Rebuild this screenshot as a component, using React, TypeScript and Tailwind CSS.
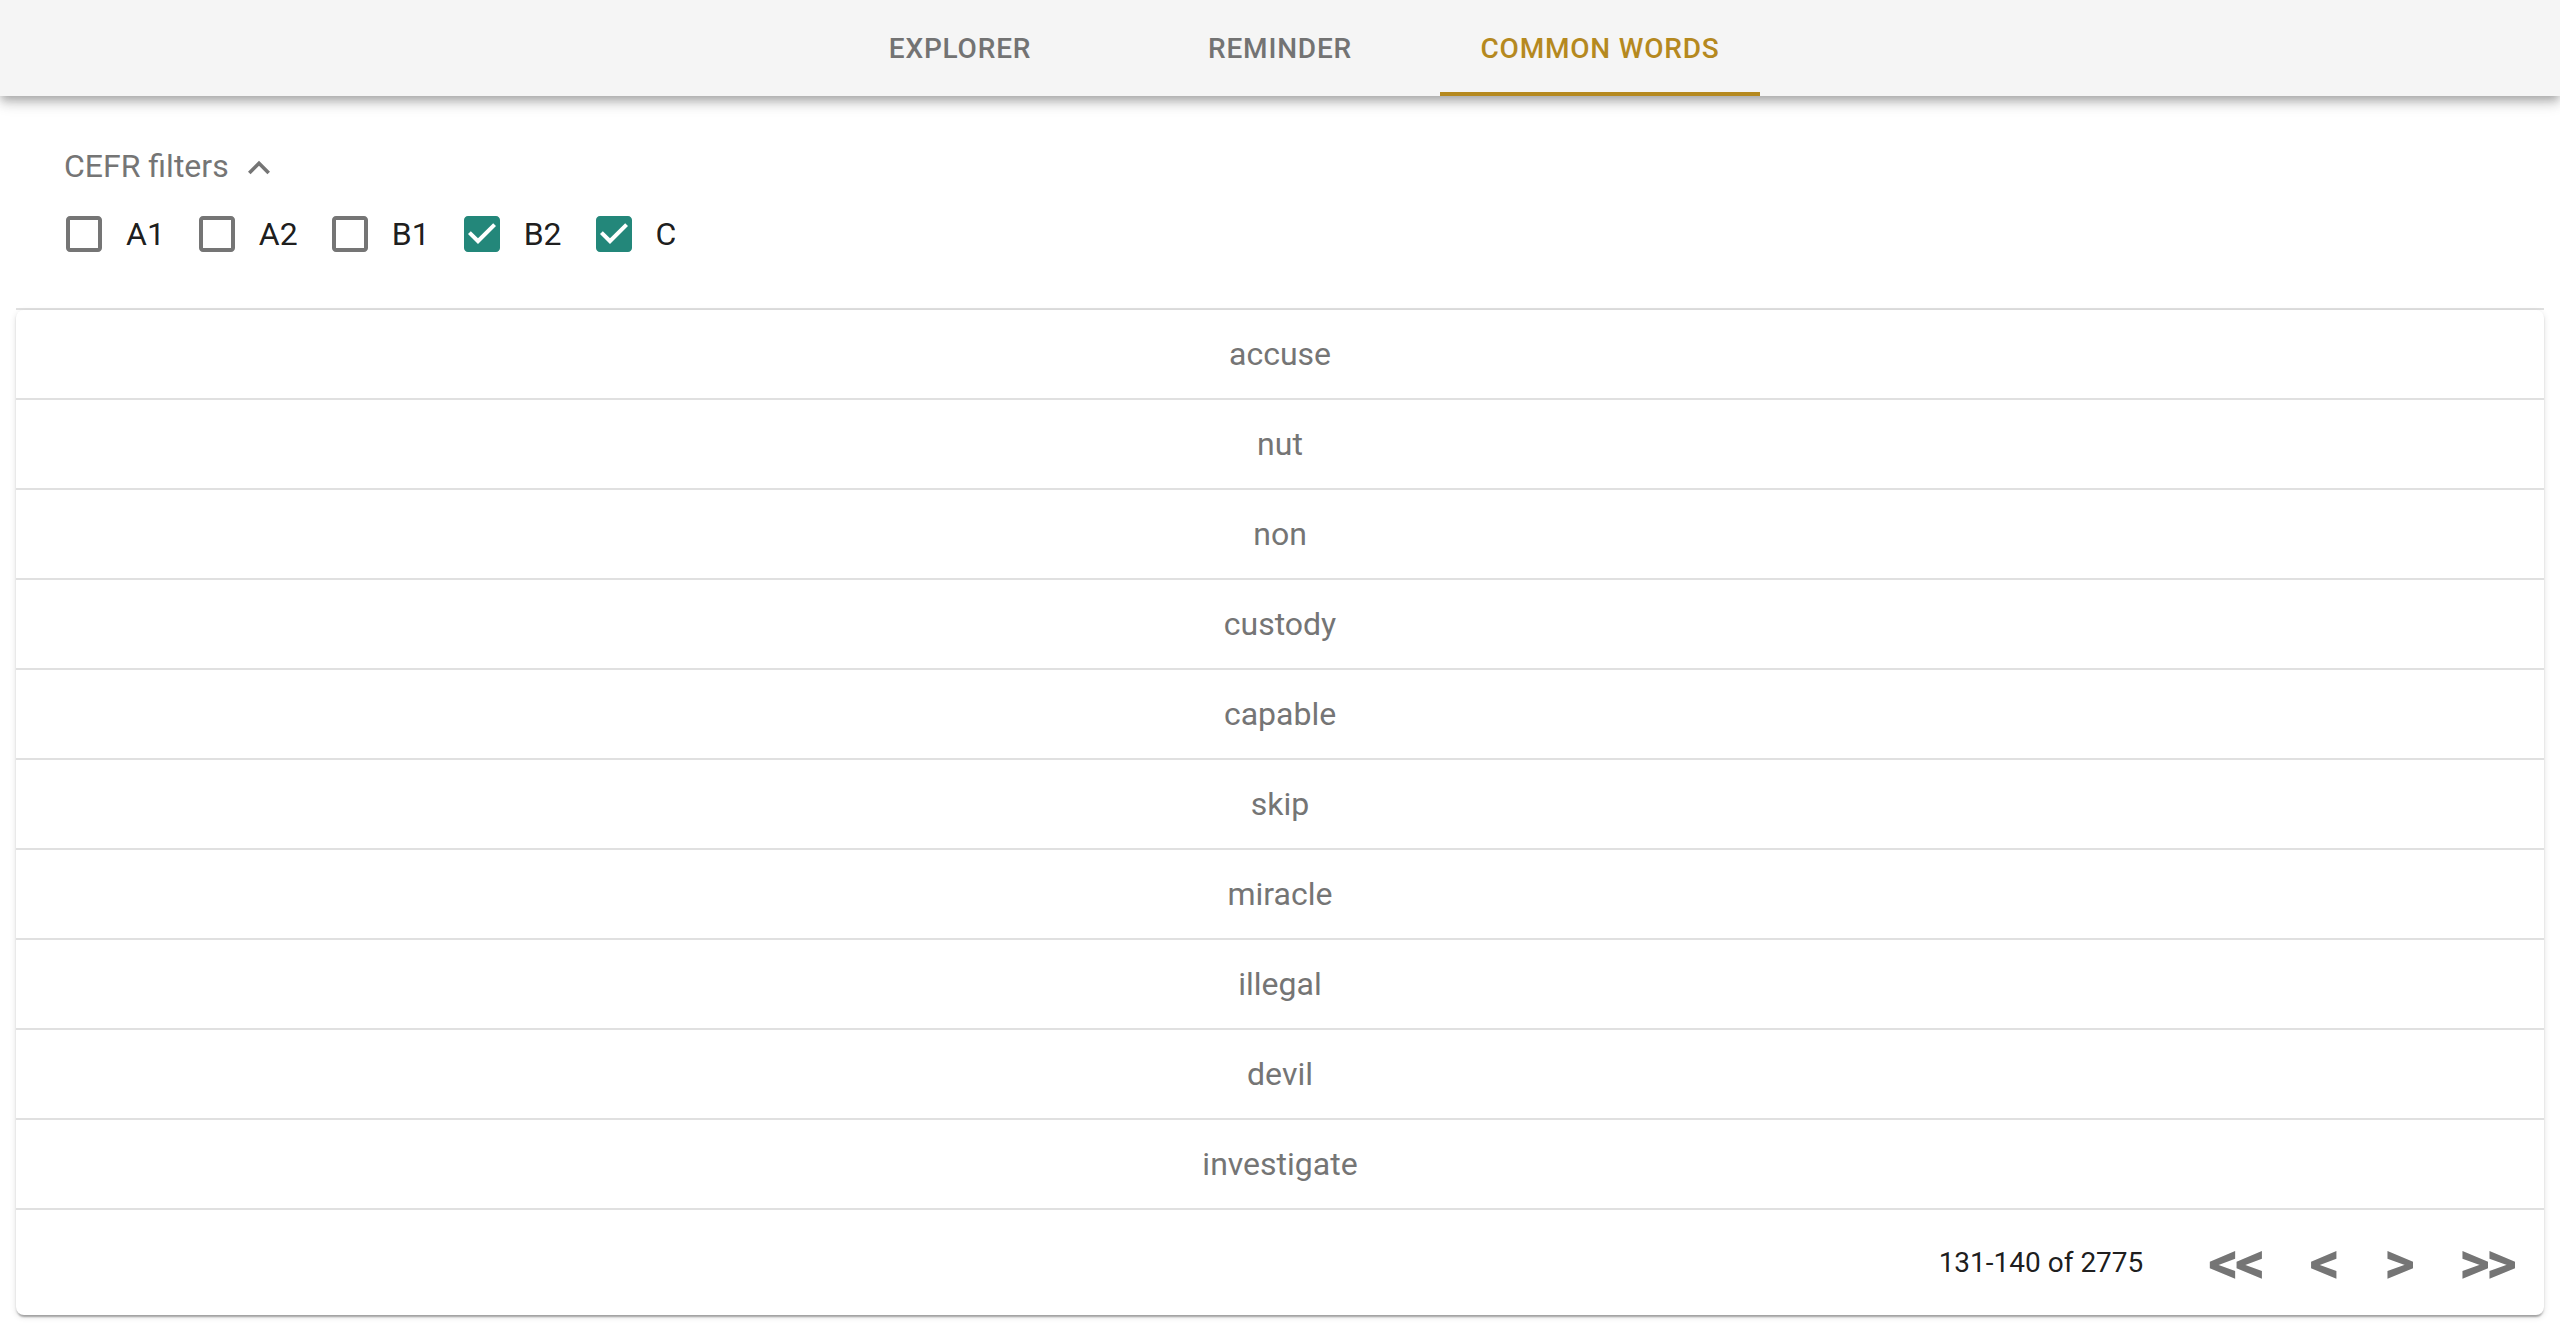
import React, { useState } from 'react';

const TABS = ['Explorer', 'Reminder', 'Common words'];
const LEVELS = ['A1', 'A2', 'B1', 'B2', 'C'];
const WORDS = ['accuse', 'nut', 'non', 'custody', 'capable', 'skip', 'miracle', 'illegal', 'devil', 'investigate'];

function CheckIcon({ checked }: { checked: boolean }) {
  return (
    <svg width="48" height="48" viewBox="0 0 24 24" className={checked ? 'fill-[#23877a]' : 'fill-[#757575]'}>
      {checked ? (
        <path d="M19 3H5c-1.11 0-2 .9-2 2v14c0 1.1.89 2 2 2h14c1.1 0 2-.9 2-2V5c0-1.1-.9-2-2-2zm-9 14l-5-5 1.41-1.41L10 14.17l7.59-7.59L19 8l-9 9z" />
      ) : (
        <path d="M19 5v14H5V5h14m0-2H5c-1.11 0-2 .9-2 2v14c0 1.1.89 2 2 2h14c1.1 0 2-.9 2-2V5c0-1.1-.9-2-2-2z" />
      )}
    </svg>
  );
}

export default function App() {
  const [tab, setTab] = useState(2);
  const [levels, setLevels] = useState<Record<string, boolean>>({ A1: false, A2: false, B1: false, B2: true, C: true });
  const [open, setOpen] = useState(true);

  return (
    <div className="min-h-screen bg-white font-['Roboto','Liberation_Sans',sans-serif]">
      <header className="relative z-10 h-[96px] bg-[#f5f5f5] shadow-[0_4px_8px_-2px_rgba(0,0,0,0.2),0_8px_10px_0_rgba(0,0,0,0.14),0_2px_20px_0_rgba(0,0,0,0.12)]">
        <nav className="flex h-full justify-center">
          {TABS.map((t, i) => (
            <button
              key={t}
              onClick={() => setTab(i)}
              className={`relative flex w-[320px] items-center justify-center pt-[1px] text-[28px] font-medium uppercase tracking-[0.8px] ${
                tab === i ? 'text-[#b5891f]' : 'text-[#737373]'
              }`}
            >
              {t}
              {tab === i && <span className="absolute bottom-0 left-0 h-[4px] w-full bg-[#b5891f]" />}
            </button>
          ))}
        </nav>
      </header>

      <main className="px-4 pt-[46px]">
        <div className="border-b-2 border-[#e0e0e0] pl-[48px] pb-[32px]">
          <button onClick={() => setOpen(!open)} className="flex h-[48px] items-center text-[32px] text-[#757575]">
            <span>CEFR filters</span>
            <svg width="44" height="44" viewBox="0 0 24 24" className="ml-[8px] mt-[4px] fill-[#757575]">
              <path d={open ? 'M12 8l-6 6 1.41 1.41L12 10.83l4.59 4.58L18 14z' : 'M16.59 8.59L12 13.17 7.41 8.59 6 10l6 6 6-6z'} />
            </svg>
          </button>
          <div className="mt-[2px] flex items-center">
            {LEVELS.map((l) => (
              <label key={l} className="ml-[-22px] mr-[32px] flex cursor-pointer items-center">
                <span className="p-[18px]" onClick={() => setLevels({ ...levels, [l]: !levels[l] })}>
                  <CheckIcon checked={levels[l]} />
                </span>
                <span className="text-[32px] text-black/90">{l}</span>
              </label>
            ))}
          </div>
        </div>

        <div className="rounded-[8px] bg-white shadow-[0_4px_2px_-2px_rgba(0,0,0,0.2),0_2px_2px_0_rgba(0,0,0,0.14),0_2px_6px_0_rgba(0,0,0,0.12)]">
          {WORDS.map((w) => (
            <div key={w} className="flex h-[90px] items-center justify-center border-b-2 border-[#e0e0e0] text-[32px] text-[#757575]">
              {w}
            </div>
          ))}
          <div className="flex h-[105px] items-center justify-end pr-[27px]">
            <span className="text-[28px] text-black/90">131-140 of 2775</span>
            <div className="ml-[65px] flex items-center gap-[44px] text-[60px] font-bold leading-none text-[#757575]">
              <button className="tracking-[-4px] pr-[4px]">&lt;&lt;</button>
              <button>&lt;</button>
              <button>&gt;</button>
              <button className="tracking-[-4px] pr-[4px]">&gt;&gt;</button>
            </div>
          </div>
        </div>
      </main>
    </div>
  );
}
